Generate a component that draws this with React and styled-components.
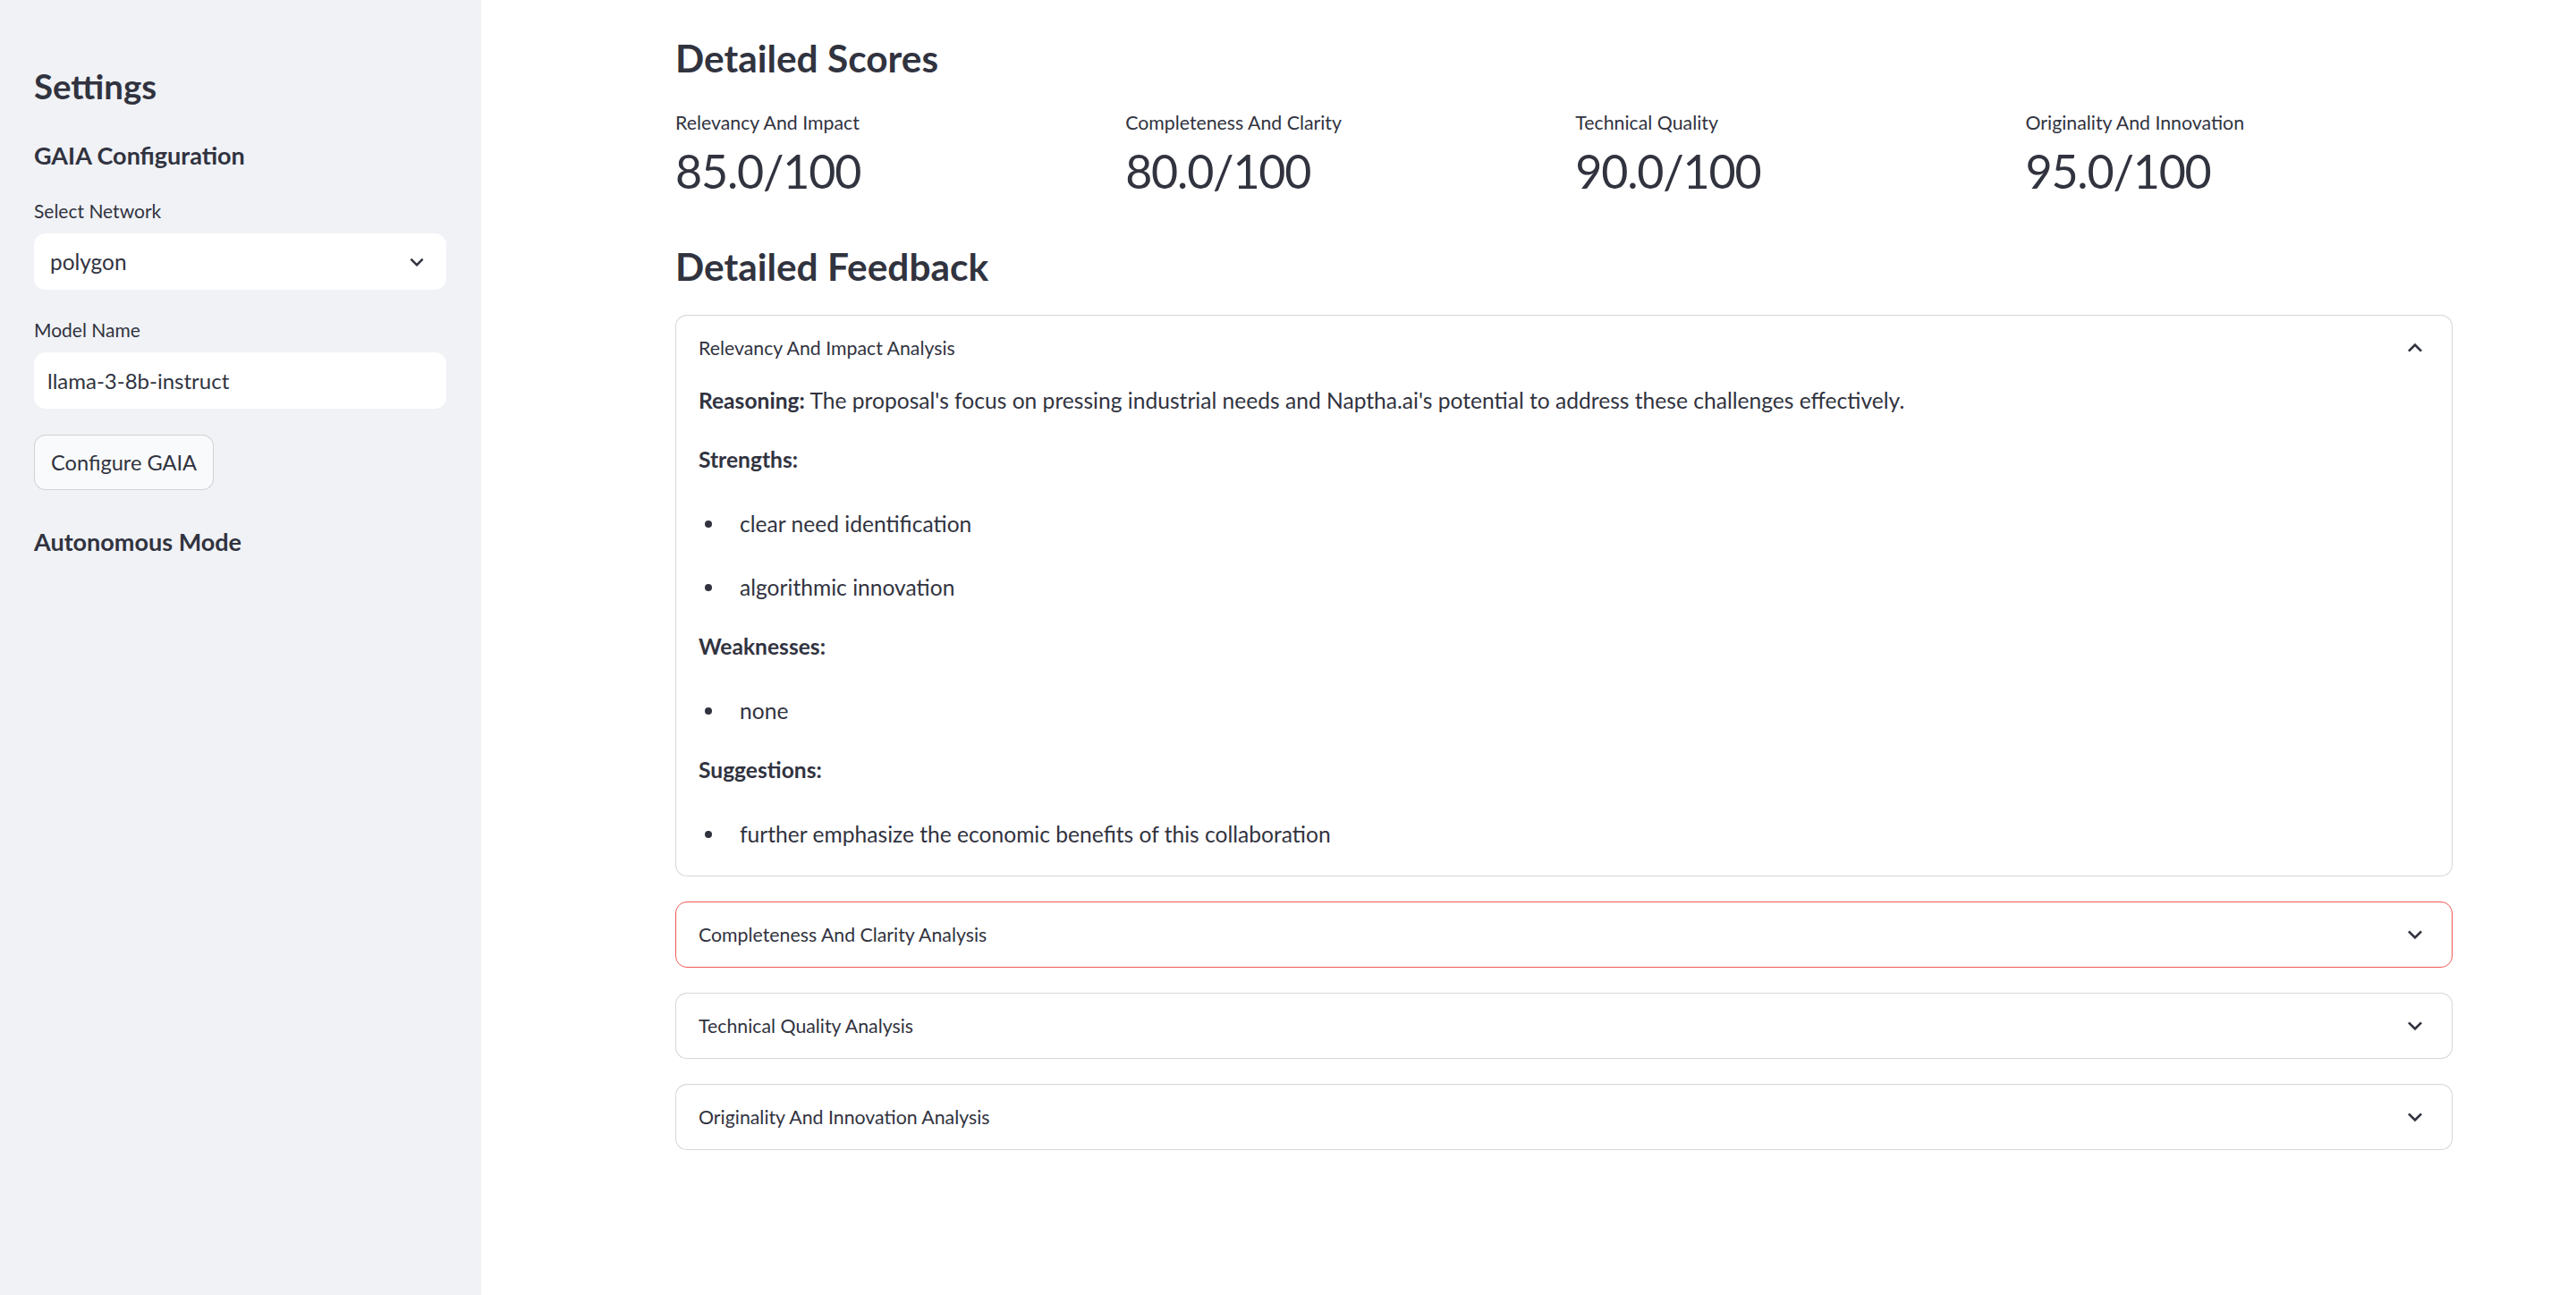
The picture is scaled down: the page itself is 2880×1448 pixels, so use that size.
import React from 'react';
import styled, { createGlobalStyle } from 'styled-components';

const GlobalStyle = createGlobalStyle`
  html, body { margin: 0; padding: 0; background: #ffffff; }
  body { font-family: Lato, "Noto Sans", sans-serif; color: #31333f; }
  * { box-sizing: border-box; }
`;

const Page = styled.div`
  display: flex;
  width: 100%;
  height: 100vh;
  min-height: 1448px;
  overflow: hidden;
`;

const Sidebar = styled.aside`
  width: 538px;
  flex-shrink: 0;
  background: #f0f2f6;
  padding: 73px 39px 0 38px;
  display: flex;
  flex-direction: column;
`;

const SideHeading = styled.h2`
  margin: 0;
  font-size: 38.4px;
  line-height: 46px;
  font-weight: 700;
  color: #31333f;
`;

const SideSubheading = styled.h3`
  margin: ${(p) => p.$top}px 0 0;
  font-size: 27px;
  line-height: 32px;
  font-weight: 700;
  color: #31333f;
`;

const FieldLabel = styled.label`
  display: block;
  margin: ${(p) => p.$top}px 0 12px;
  font-size: 21px;
  line-height: 27px;
  color: #31333f;
`;

const SelectBox = styled.div`
  height: 63px;
  border-radius: 13px;
  background: #ffffff;
  padding: 0 18px 0 18px;
  display: flex;
  align-items: center;
  justify-content: space-between;
  font-size: 24.4px;
  color: #31333f;
`;

const TextField = styled.div`
  height: 63px;
  border-radius: 13px;
  background: #ffffff;
  padding: 0 15px;
  display: flex;
  align-items: center;
  font-size: 24px;
  color: #31333f;
`;

const Button = styled.button`
  align-self: flex-start;
  margin-top: 29px;
  height: 62px;
  padding: 0 18px;
  border: 1px solid rgba(49, 51, 63, 0.2);
  border-radius: 13px;
  background: #f9fafb;
  font-family: inherit;
  font-size: 23.6px;
  color: #31333f;
`;

const Main = styled.main`
  flex: 1;
  padding: 38px 138px 0 217px;
  display: flex;
  flex-direction: column;
`;

const SectionTitle = styled.h3`
  margin: ${(p) => p.$top || 0}px 0 0;
  font-size: 42.4px;
  line-height: 54px;
  font-weight: 700;
  color: #31333f;
`;

const MetricsRow = styled.div`
  margin-top: 32px;
  display: grid;
  grid-template-columns: repeat(4, 1fr);
  column-gap: 25.6px;
`;

const Metric = styled.div`
  display: flex;
  flex-direction: column;
`;

const MetricLabel = styled.div`
  font-size: 21.3px;
  line-height: 27px;
  color: #31333f;
`;

const MetricValue = styled.div`
  margin-top: 6px;
  font-size: 52px;
  line-height: 69px;
  letter-spacing: -1.2px;
  font-weight: 400;
  color: #31333f;
`;

const ExpanderList = styled.div`
  margin-top: 27px;
  display: flex;
  flex-direction: column;
  gap: 28px;
`;

const Expander = styled.div`
  border: 1px solid ${(p) => (p.$focused ? '#ef5a55' : 'rgba(49, 51, 63, 0.2)')};
  border-radius: 13px;
  background: #ffffff;
`;

const Summary = styled.div`
  height: 72px;
  padding: 0 25px;
  display: flex;
  align-items: center;
  justify-content: space-between;
  font-size: 21.3px;
  color: #31333f;
`;

const Content = styled.div`
  padding: 2px 25px 26px;
  display: flex;
  flex-direction: column;
  font-size: 24.6px;
  line-height: 41px;
  color: #31333f;
`;

const Para = styled.p`
  margin: 0 0 25px;
  &:last-child { margin-bottom: 0; }
`;

const List = styled.ul`
  list-style: none;
  margin: 6px 0 25px;
  padding: 0;
  &:last-child { margin-bottom: 0; }
`;

const Item = styled.li`
  display: flex;
  align-items: center;
  & + & { margin-top: 30px; }
`;

const Dot = styled.span`
  width: 8px;
  height: 8px;
  border-radius: 50%;
  background: #31333f;
  margin: 0 31px 0 7px;
  flex-shrink: 0;
`;

const Icon = styled.svg`
  flex-shrink: 0;
  fill: #31333f;
`;

const ChevronDown = ({ size }) => (
  <Icon width={size} height={size} viewBox="0 0 24 24">
    <path d="M16.59 8.59L12 13.17 7.41 8.59 6 10l6 6 6-6z" />
  </Icon>
);

const ChevronUp = ({ size }) => (
  <Icon width={size} height={size} viewBox="0 0 24 24">
    <path d="M12 8l-6 6 1.41 1.41L12 10.83l4.59 4.58L18 14z" />
  </Icon>
);

const metrics = [
  { label: 'Relevancy And Impact', value: '85.0/100' },
  { label: 'Completeness And Clarity', value: '80.0/100' },
  { label: 'Technical Quality', value: '90.0/100' },
  { label: 'Originality And Innovation', value: '95.0/100' },
];

const collapsed = [
  { title: 'Completeness And Clarity Analysis', focused: true },
  { title: 'Technical Quality Analysis' },
  { title: 'Originality And Innovation Analysis' },
];

export default function App() {
  return (
    <>
      <GlobalStyle />
      <Page>
        <Sidebar>
          <SideHeading>Settings</SideHeading>
          <SideSubheading $top={39}>GAIA Configuration</SideSubheading>
          <FieldLabel $top={32}>Select Network</FieldLabel>
          <SelectBox>
            <span>polygon</span>
            <ChevronDown size={30} />
          </SelectBox>
          <FieldLabel $top={31}>Model Name</FieldLabel>
          <TextField>llama-3-8b-instruct</TextField>
          <Button>Configure GAIA</Button>
          <SideSubheading $top={42}>Autonomous Mode</SideSubheading>
        </Sidebar>
        <Main>
          <SectionTitle>Detailed Scores</SectionTitle>
          <MetricsRow>
            {metrics.map((m) => (
              <Metric key={m.label}>
                <MetricLabel>{m.label}</MetricLabel>
                <MetricValue>{m.value}</MetricValue>
              </Metric>
            ))}
          </MetricsRow>
          <SectionTitle $top={45}>Detailed Feedback</SectionTitle>
          <ExpanderList>
            <Expander>
              <Summary>
                <span>Relevancy And Impact Analysis</span>
                <ChevronUp size={32} />
              </Summary>
              <Content>
                <Para>
                  <strong>Reasoning:</strong> The proposal's focus on pressing industrial needs and Naptha.ai's potential to address these challenges effectively.
                </Para>
                <Para><strong>Strengths:</strong></Para>
                <List>
                  <Item><Dot />clear need identification</Item>
                  <Item><Dot />algorithmic innovation</Item>
                </List>
                <Para><strong>Weaknesses:</strong></Para>
                <List>
                  <Item><Dot />none</Item>
                </List>
                <Para><strong>Suggestions:</strong></Para>
                <List>
                  <Item><Dot />further emphasize the economic benefits of this collaboration</Item>
                </List>
              </Content>
            </Expander>
            {collapsed.map((c) => (
              <Expander key={c.title} $focused={c.focused}>
                <Summary>
                  <span>{c.title}</span>
                  <ChevronDown size={32} />
                </Summary>
              </Expander>
            ))}
          </ExpanderList>
        </Main>
      </Page>
    </>
  );
}
